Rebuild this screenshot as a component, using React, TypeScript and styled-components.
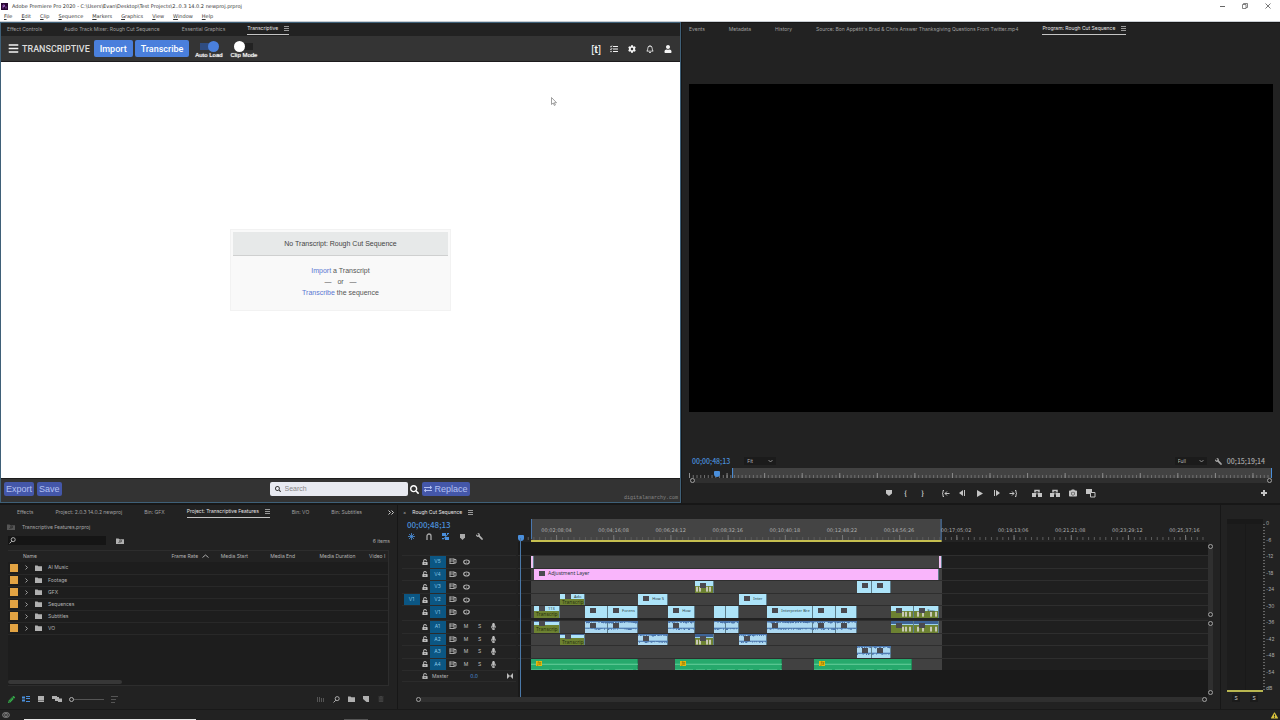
import React from "react";
import styled, { createGlobalStyle, css } from "styled-components";
import {
  FaBars,
  FaCamera,
  FaCog,
  FaExchangeAlt,
  FaMicrophone,
  FaRegBell,
  FaSearch,
  FaTasks,
  FaUnlockAlt,
  FaUser,
  FaWrench,
  FaPencilAlt,
  FaTrashAlt,
  FaExclamationTriangle,
} from "react-icons/fa";

const UI = `Inter, "Noto Sans", sans-serif`;
const NUM = `"Noto Sans CJK SC", "Noto Sans", sans-serif`;
const SYS = `"DejaVu Sans", "Noto Sans", sans-serif`;
const WEB = `"Liberation Sans", Arial, sans-serif`;

const Global = createGlobalStyle`
  *, *::before, *::after { box-sizing: border-box; }
  body { margin: 0; background: #181818; }
  button, input, select {
    font: inherit; color: inherit; background: none; border: 0; padding: 0; margin: 0;
    appearance: none; outline: none; border-radius: 0;
  }
  svg { display: block; flex: none; }
`;

/* ---------- frame ---------- */

const Page = styled.div`
  min-height: 100vh;
  display: grid;
  grid-template-rows: auto 1fr auto auto;
  background: #171717;
  color: #a8a8a8;
  font: 5px/10px ${UI};
  overflow: hidden;
`;

const WindowHead = styled.header`
  height: 22px;
  background: #fff;
  color: #333;
  border-bottom: 1px solid #c9ced3;
`;

const TitleBar = styled.div`
  height: 12px;
  display: flex;
  align-items: center;
  gap: 4px;
  padding-left: 1px;
  font: 5px/12px ${SYS};
`;

const WindowButtons = styled.div`
  margin-left: auto;
  display: flex;
  gap: 15px;
  padding-right: 8px;
  button {
    width: 8px;
    height: 10px;
    display: grid;
    place-items: center;
  }
`;

const MenuBar = styled.nav`
  display: flex;
  gap: 9px;
  padding-left: 4px;
  font: 5px/9px ${SYS};
  u {
    text-underline-offset: 1px;
  }
`;

const TopRow = styled.main`
  display: grid;
  grid-template-columns: 681fr 598fr;
  gap: 1px;
  min-height: 0;
`;

const TabStrip = styled.div<{ $left?: number; $h?: number; $gap?: number; $top?: number }>`
  display: flex;
  align-items: flex-start;
  gap: ${(p) => p.$gap ?? 22}px;
  height: ${(p) => p.$h ?? 13}px;
  padding: ${(p) => p.$top ?? 0}px 3px 0 ${(p) => p.$left ?? 6}px;
  background: #222;
  white-space: nowrap;
`;

const Tab = styled.button<{ $active?: boolean; $plain?: boolean }>`
  height: 12px;
  flex: none;
  display: flex;
  align-items: center;
  gap: 6px;
  font: 5px/13px ${UI};
  color: ${(p) => (p.$active ? "#e4e4e4" : "#a0a0a0")};
  ${(p) =>
    p.$active && !p.$plain
      ? css`
          border-bottom: 1px solid #c4c4c4;
        `
      : ""}
`;

const MoreTabs = styled.button`
  height: 12px;
  margin-left: auto;
  display: grid;
  place-items: center;
`;

/* ---------- transcript panel ---------- */

const TranscriptPanel = styled.section`
  display: flex;
  flex-direction: column;
  min-width: 0;
  border: 1px solid #3f6078;
  background: #fff;
`;

const Toolbar = styled.div`
  height: 26px;
  display: flex;
  align-items: center;
  padding: 0 8px 0 7px;
  background: #343434;
  border-bottom: 1px solid #1d1b1d;
  color: #f4f4f4;
  font-family: ${WEB};
`;

const Brand = styled.h1`
  margin: 0 4px 0 3px;
  font: 500 9px/12px Roboto, ${WEB};
  color: #dcdcdc;
`;

const Primary = styled.button`
  height: 17px;
  padding: 0 6px;
  margin-right: 2px;
  border-radius: 2px;
  background: #4a7fdc;
  color: #fff;
  font: 500 9px/16px Roboto, ${WEB};
`;

const Toggles = styled.div`
  display: flex;
  gap: 6px;
  margin-left: 3px;
`;

const Toggle = styled.label`
  width: 29px;
  display: flex;
  flex-direction: column;
  align-items: center;
  font: 6px/7px ${WEB};
  color: #fff;
  white-space: nowrap;
  text-shadow: 0 0 1px #fff;
`;

const Switch = styled.input`
  width: 20px;
  height: 11px;
  display: flex;
  align-items: center;
  background: linear-gradient(#222, #222) center / 18px 7px no-repeat;
  border-radius: 5px;
  margin: 2px 0 0;
  cursor: pointer;
  &::before {
    content: "";
    width: 11px;
    height: 11px;
    border-radius: 50%;
    background: #fff;
  }
  &:checked {
    justify-content: flex-end;
    background: linear-gradient(#2f4c80, #2f4c80) center / 18px 7px no-repeat;
  }
  &:checked::before {
    background: #4a80dc;
  }
`;

const ToolbarIcons = styled.div`
  margin-left: auto;
  display: flex;
  align-items: center;
  gap: 10px;
  button {
    display: grid;
    place-items: center;
    min-width: 8px;
    height: 12px;
  }
`;

const Mark = styled.span`
  margin-right: -1px;
  font: 11px/12px ${WEB};
`;

const Canvas = styled.div`
  flex: 1;
  display: grid;
  place-items: center;
  position: relative;
`;

const Cursor = styled.svg`
  position: absolute;
  left: 81%;
  top: 35px;
`;

const Card = styled.div`
  width: 221px;
  height: 82px;
  padding: 2px;
  border: 1px solid #f2f2f2;
  background: #f9f9f9;
  text-align: center;
  font: 7px/11px ${WEB};
  color: #555;
  h2 {
    margin: 0 0 9px;
    height: 24px;
    background: #e7e9e9;
    border-bottom: 1px solid #cfd0d0;
    font: 7px/23px ${WEB};
    color: #444;
  }
  p {
    margin: 0;
    white-space: pre;
  }
  a {
    color: #5a78d2;
    text-decoration: none;
  }
`;

const Footer = styled.div`
  display: grid;
  grid-template-columns: 266fr 138px 271fr;
  height: 24px;
  padding: 3px 2px 0 3px;
  background: #333;
  border-top: 1px solid #1d1d1d;
  font-family: ${WEB};
`;

const FootGroup = styled.div<{ $split?: boolean }>`
  display: flex;
  align-items: flex-start;
  gap: 3px;
  ${(p) =>
    p.$split
      ? css`
          justify-content: space-between;
          padding-left: 2px;
        `
      : ""}
`;

const FootButton = styled.button`
  height: 14px;
  padding: 0 2px;
  border-radius: 2px;
  background: #4457a9;
  color: #b3c0f2;
  font: 9px/13px ${WEB};
  display: flex;
  align-items: center;
  gap: 3px;
`;

const FindButton = styled.button`
  height: 14px;
  color: #fff;
`;

const SearchField = styled.label`
  flex: 1;
  height: 14px;
  display: flex;
  align-items: center;
  gap: 4px;
  padding-left: 5px;
  border-radius: 2px;
  background: #e8eaf1;
  color: #333;
  input {
    flex: 1;
    min-width: 0;
    font: 7px/12px ${WEB};
  }
  input::placeholder {
    color: #888;
    opacity: 1;
  }
`;

const Credit = styled.a`
  align-self: flex-end;
  color: #858585;
  font: 5px/8px "Liberation Mono", monospace;
  text-decoration: none;
`;

/* ---------- program panel ---------- */

const ProgramPanel = styled.section`
  display: flex;
  flex-direction: column;
  min-width: 0;
  margin-top: 1px;
  background: #222;
`;

const VideoArea = styled.div`
  flex: 1;
  display: flex;
  padding: 48px 7px 43px;
`;

const Video = styled.div`
  flex: 1;
  background: #000;
`;

const MonitorBar = styled.div`
  height: 12px;
  display: flex;
  align-items: center;
  padding: 0 15px 0 10px;
  gap: 5px;
`;

const Timecode = styled.span<{ $size?: number; $dim?: boolean }>`
  display: block;
  font: 500 ${(p) => p.$size ?? 7}px/12px ${NUM};
  color: ${(p) => (p.$dim ? "#a5a5a5" : "#4a90dc")};
`;

const Picker = styled.select`
  width: 32px;
  height: 8px;
  margin-left: 9px;
  padding-left: 3px;
  background: #1b1b1b;
  color: #b5b5b5;
  font: 5px/8px ${UI};
`;

const PickerWrap = styled.span`
  display: flex;
  align-items: center;
  svg {
    margin-left: -8px;
    margin-right: 6px;
    pointer-events: none;
  }
`;

const Wrench = styled(FaWrench)`
  transform: scaleX(-1);
`;

const Spacer = styled.span`
  flex: 1;
`;

const MonitorRuler = styled.div`
  height: 10px;
  margin: 1px 8px 0 7px;
  position: relative;
  svg {
    width: 100%;
    height: 10px;
  }
`;

const Marker = styled.span<{ $at: string; $top: number }>`
  position: absolute;
  left: ${(p) => p.$at};
  top: ${(p) => p.$top}px;
  width: 6px;
  height: 6px;
  background: #4a8fdc;
  border-radius: 1px 1px 3px 3px;
`;

const ScrollBar = styled.div<{ $vertical?: boolean }>`
  display: flex;
  flex-direction: ${(p) => (p.$vertical ? "column" : "row")};
  justify-content: space-between;
  background: #2f2f2f;
  ${(p) => (p.$vertical ? "width: 5px;" : "height: 5px;")}
  &::before,
  &::after {
    content: "";
    width: 5px;
    height: 5px;
    border: 1px solid #a0a0a0;
    border-radius: 50%;
    background: #222;
  }
`;

const MonitorScroll = styled(ScrollBar)`
  margin: 0 8px 1px;
`;

const Transport = styled.div`
  flex: none;
  height: 19px;
  display: flex;
  align-items: center;
  padding: 0 7px 1px 198px;
  color: #c4c4c4;
`;

const TransportGroup = styled.div<{ $w: number }>`
  display: flex;
  margin-right: 6px;
  &:last-child {
    margin-right: 5px;
  }
  button {
    width: ${(p) => p.$w}px;
    height: 12px;
    display: grid;
    place-items: center;
    font: 700 7px/10px ${NUM};
  }
`;

/* ---------- bottom row ---------- */

const BottomRow = styled.div`
  display: grid;
  grid-template-columns: 397fr 822fr 59px;
  gap: 1px;
  padding-top: 2px;
  height: 206px;
`;

const Panel = styled.section`
  min-width: 0;
  display: flex;
  flex-direction: column;
  background: #222;
`;

const ProjectPath = styled.div`
  height: 12px;
  display: flex;
  align-items: center;
  gap: 7px;
  padding: 0 7px;
`;

const FilterRow = styled.div`
  height: 15px;
  display: flex;
  align-items: center;
  padding: 0 7px 0 8px;
`;

const FilterField = styled.label`
  width: 98px;
  height: 9px;
  margin-right: 10px;
  padding-left: 1px;
  display: flex;
  align-items: center;
  background: #151515;
  input {
    min-width: 0;
    flex: 1;
  }
`;

const BinFrame = styled.div`
  flex: 1;
  margin: 2px 8px 0;
  display: flex;
  flex-direction: column;
  justify-content: space-between;
  border: solid #2d2d2d;
  border-width: 1px 1px 1px 0;
  background: #1d1d1d;
  overflow: hidden;
`;

const BinTable = styled.table`
  width: 100%;
  border-collapse: collapse;
  table-layout: fixed;
  font: 5px/11px ${UI};
  color: #b4b4b4;
  th {
    height: 11px;
    padding: 0;
    font-weight: 400;
    text-align: left;
    white-space: nowrap;
    background: #222;
  }
  th:first-child {
    padding-left: 15px;
  }
  td {
    height: 12px;
    padding: 0;
    border-bottom: 1px solid #282828;
  }
  th svg {
    display: inline-block;
    margin-left: 2px;
  }
`;

const BinName = styled.div`
  display: flex;
  align-items: center;
  gap: 6px;
  padding-left: 2px;
  white-space: nowrap;
`;

const Label = styled.span`
  width: 8px;
  height: 8px;
  background: #e2a343;
`;

const Thumb = styled.div`
  width: 30%;
  height: 4px;
  margin-bottom: 1px;
  border-radius: 2px;
  background: #373737;
`;

const BinTools = styled.div`
  height: 23px;
  display: flex;
  align-items: center;
  gap: 7px;
  padding: 3px 12px 0 7px;
  color: #b0b0b0;
  button {
    height: 9px;
    min-width: 8px;
    display: grid;
    place-items: center;
  }
`;

const ZoomRange = styled.input`
  width: 35px;
  height: 6px;
  background: linear-gradient(#555, #555) center / 100% 1px no-repeat;
  &::-webkit-slider-thumb {
    appearance: none;
    width: 5px;
    height: 5px;
    border: 1px solid #b0b0b0;
    border-radius: 50%;
    background: #222;
  }
`;

/* ---------- timeline ---------- */

const TimelineGrid = styled.div`
  flex: 1;
  display: grid;
  grid-template-columns: 120px 1fr 12px;
  min-height: 0;
`;

const HeadColumn = styled.div`
  padding: 0 2px 0 4px;
`;

const HeadTools = styled.div`
  height: 37px;
  padding: 1px 0 0 5px;
`;

const ToolIcons = styled.div`
  display: flex;
  gap: 8px;
  padding-top: 1px;
  button {
    width: 9px;
    height: 9px;
    display: grid;
    place-items: center;
  }
`;

const TrackGroup = styled.div<{ $rows: number; $h: number }>`
  display: grid;
  grid-template-rows: repeat(${(p) => p.$rows}, minmax(0, 1fr));
  height: ${(p) => p.$h}px;
`;

const TrackHead = styled.div`
  display: grid;
  grid-template-columns: 19px 8px 17px 13px 14px 13px 14px;
  grid-template-rows: minmax(0, 1fr);
  align-items: center;
  justify-items: center;
  border-top: 1px solid #2b2b2b;
  color: #c0c0c0;
  font: 5px/11px ${UI};
  button {
    display: grid;
    place-items: center;
  }
`;

const TrackTag = styled.button`
  width: 16px;
  height: 100%;
  background: #0b5683;
  color: #84c2e2;
  font: 5px/11px ${UI};
`;

const MasterHead = styled.div`
  height: 12px;
  display: flex;
  align-items: center;
  gap: 4px;
  padding: 0 3px 0 20px;
  border-top: 1px solid #2b2b2b;
  border-bottom: 1px solid #2b2b2b;
  color: #b4b4b4;
`;

const Value = styled.span`
  margin: 0 auto 0 18px;
  color: #4a8fdc;
`;

const TrackArea = styled.div`
  position: relative;
  display: flex;
  flex-direction: column;
  min-width: 0;
  background: #1a1a1a;
`;

const Ruler = styled.div`
  height: 24px;
  background: #222;
  position: relative;
  svg {
    width: 100%;
    height: 24px;
  }
`;

const RulerLabels = styled.div`
  position: absolute;
  left: 10px;
  right: -5px;
  top: 7px;
  display: flex;
  color: #b0b0b0;
  font: 5px/10px ${SYS};
  span {
    flex: 1 0 0;
    min-width: 0;
    text-align: center;
  }
`;

const LaneStack = styled.div`
  margin-top: 13px;
  background: linear-gradient(90deg, #1f1f1f 13px, #414141 13px, #414141 61.4%, #1f1f1f 61.4%);
`;

const Lane = styled.div`
  display: flex;
  min-width: 0;
  min-height: 0;
  border-top: 1px solid #2e2e2e;
`;

const Divider = styled.div`
  height: 2px;
  background: #222;
`;

const Gap = styled.div<{ $n: number }>`
  flex: ${(p) => p.$n} 0 0;
  min-width: 0;
`;

type Kind = "video" | "adj" | "title" | "titleAudio" | "bars" | "barsAudio" | "audio" | "music" | "edge";

const fills: Record<Kind, string> = {
  video: "#ade4f9",
  adj: "#f9b5fb",
  title: "linear-gradient(#ade4f9 5px, #6d8232 5px)",
  titleAudio: "linear-gradient(#4a6a9a 1px, #ade4f9 1px, #ade4f9 4px, #6d8232 4px)",
  bars: "linear-gradient(#ade4f9 5px, #6d8232 5px)",
  barsAudio: "linear-gradient(#3f6496 3px, #9cd0ec 3px, #9cd0ec 4px, #6d8232 4px)",
  audio: "#add9f1",
  music: "#26a96c",
  edge: "#f1c1f3",
};

const ClipBox = styled.div<{ $n: number; $kind: Kind }>`
  flex: ${(p) => p.$n} 0 0;
  min-width: 0;
  overflow: hidden;
  display: grid;
  background: ${(p) => fills[p.$kind]};
  box-shadow: inset -1px 0 ${(p) => (p.$kind === "music" ? "#1f8a58" : "#5d7d8b")};
  > * {
    grid-area: 1 / 1;
    min-width: 0;
    min-height: 0;
  }
  > svg {
    width: 100%;
    height: 100%;
  }
`;

const ClipName = styled.div<{ $kind: Kind }>`
  display: flex;
  align-items: flex-start;
  gap: 3px;
  padding: ${(p) => (p.$kind === "title" || p.$kind === "titleAudio" ? 0 : 2)}px 0 0 5px;
  color: #2a3a42;
  font: ${(p) => (p.$kind === "adj" ? 5 : 4)}px/5px "Noto Sans", sans-serif;
  white-space: nowrap;
`;

const FxBadge = styled.i<{ $gold?: boolean }>`
  flex: none;
  width: 6px;
  height: 5px;
  background: ${(p) => (p.$gold ? "#e5b80f" : "#4a4a50")};
  color: #5c4a00;
  font: italic 4px/5px ${UI};
  text-align: center;
`;

const TitleText = styled.div`
  padding: 5px 0 0 2px;
  color: #26300f;
  font: 5px/7px "Noto Sans", sans-serif;
  white-space: nowrap;
`;

const PlayLine = styled.span`
  position: absolute;
  left: 2px;
  top: 20px;
  bottom: 0;
  width: 1px;
  background: #4a78a8;
`;

const TimelineScroll = styled(ScrollBar)`
  margin: 0 13px 7px 18px;
`;

const VScrolls = styled.div`
  padding: 26px 0 2px;
  display: flex;
  flex-direction: column;
  gap: 4px;
  div:first-child {
    height: 73px;
  }
  div:last-child {
    flex: 1;
  }
`;

/* ---------- meters ---------- */

const Meters = styled.div`
  flex: 1;
  display: grid;
  grid-template-columns: 36px auto;
  grid-template-rows: 1fr 17px;
  padding: 14px 0 0 6px;
`;

const MeterWell = styled.div`
  display: grid;
  grid-template-columns: 1fr 1px 1fr;
  border-top: 5px solid #191919;
  border-bottom: 2px solid #b9b650;
  background: #1d1d1d;
  span {
    background: #191919;
    grid-column: 2;
  }
`;

const MeterScale = styled.div`
  display: flex;
  flex-direction: column;
  justify-content: space-between;
  padding: 1px 0 0 3px;
  font: 5px/7px ${UI};
  background: repeating-linear-gradient(#666 0 1px, transparent 1px 3px) 0 5px / 2px 100% no-repeat;
`;

const SoloRow = styled.div`
  display: flex;
  justify-content: space-around;
  align-items: flex-start;
  padding-top: 2px;
  button {
    width: 8px;
    height: 8px;
    background: #1b1b1b;
    color: #d0d0d0;
    font: 5px/8px ${UI};
  }
`;

const StatusBar = styled.footer`
  height: 11px;
  display: flex;
  align-items: center;
  justify-content: space-between;
  padding: 0 2px;
  border-top: 1px solid #191919;
  background:
    linear-gradient(#e8e8e8, #e8e8e8) 24px 100% / 172px 1px no-repeat,
    linear-gradient(#555, #555) 344px 100% / 24px 1px no-repeat,
    #222;
`;

/* ---------- icons ---------- */

const Lines = () => (
  <svg width="5" height="5" viewBox="0 0 5 5" stroke="#999">
    <path d="M0 .5h5M0 2.5h5M0 4.5h5" />
  </svg>
);

const Chevron = () => (
  <svg width="5" height="4" viewBox="0 0 5 4" fill="none" stroke="#aaa" strokeWidth=".8">
    <path d="M.5 1 2.5 3 4.5 1" />
  </svg>
);

const Glass = () => (
  <svg width="7" height="7" viewBox="0 0 8 8" fill="none" stroke="#b4b4b4" strokeWidth="1.1">
    <circle cx="4.8" cy="3" r="2.3" />
    <path d="M3.2 4.8.6 7.4" />
  </svg>
);

const Folder = () => (
  <svg width="7" height="6" viewBox="0 0 7 6" fill="#b0b0b0">
    <path d="M0 .5h2.5L3.3 1.3H7V6H0z" />
  </svg>
);

const SearchFolder = ({ color, hole }: { color: string; hole: string }) => (
  <svg width="8" height="6" viewBox="0 0 8 6">
    <path d="M0 .5h2.5L3.3 1.3H8V6H0z" fill={color} />
    <path d="M2.5 5 4 3.5" stroke={hole} strokeWidth=".8" />
    <circle cx="4.6" cy="3" r="1" stroke={hole} strokeWidth=".7" fill="none" />
  </svg>
);

const Film = () => (
  <svg width="8" height="7" viewBox="0 0 8 7" fill="none" stroke="#b4b4b4">
    <path d="M.5 1h4.5M.5 3h4.5M.5 5.5h4.5M1 .5v5M5 .5v5.5" strokeWidth=".9" />
    <path d="M5 1.5h2v3.5H5" strokeWidth=".9" />
  </svg>
);

const Eye = () => (
  <svg width="7" height="6" viewBox="0 0 7 6" fill="none" stroke="#b4b4b4" strokeWidth="1.2">
    <ellipse cx="3.5" cy="3" rx="2.8" ry="2" />
    <circle cx="3.5" cy="3" r=".5" fill="#b4b4b4" stroke="none" />
  </svg>
);

const Disclosure = () => (
  <svg width="5" height="5" viewBox="0 0 5 5" fill="none" stroke="#aaa" strokeWidth=".9">
    <path d="M1.5.5 3.5 2.5 1.5 4.5" />
  </svg>
);

/* ---------- data ---------- */

type Clip = { from: number; to: number; kind: Kind; name?: string; fx?: boolean };
const c = (from: number, to: number, kind: Kind, name?: string, fx = true): Clip => ({ from, to, kind, name, fx });

/* Lane coordinates run over the visible span of the sequence. */
const SPAN_START = 518;
const SPAN_END = 1207;

const videoLanes: Clip[][] = [
  [c(531, 534, "edge", undefined, false), c(938, 941, "edge", undefined, false)],
  [c(534, 938, "adj", "Adjustment Layer")],
  [c(695, 714, "bars"), c(857, 871, "video"), c(871, 890, "video")],
  [c(560, 585, "title", "Ado"), c(638, 668, "video", "How S"), c(739, 767, "video", "Inter")],
  [
    c(534, 560, "title", "113"),
    c(585, 608, "video"),
    c(608, 638, "video", "Forens"),
    c(668, 695, "video", "How"),
    c(714, 726, "video", undefined, false),
    c(726, 739, "video", undefined, false),
    c(767, 813, "video", "Interpreter Bre"),
    c(813, 836, "video"),
    c(836, 857, "video"),
    c(890, 913, "bars"),
    c(913, 938, "bars", "Fau"),
  ],
];

const audioLanes: Clip[][] = [
  [
    c(534, 560, "titleAudio"),
    c(585, 608, "audio"),
    c(608, 638, "audio"),
    c(668, 695, "audio"),
    c(714, 726, "audio", undefined, false),
    c(726, 739, "audio", undefined, false),
    c(767, 813, "audio"),
    c(813, 836, "audio"),
    c(836, 857, "audio"),
    c(890, 913, "barsAudio"),
    c(913, 938, "barsAudio"),
  ],
  [c(560, 585, "titleAudio"), c(638, 668, "audio"), c(695, 714, "barsAudio"), c(739, 767, "audio")],
  [c(857, 871, "audio"), c(871, 890, "audio")],
  [c(531, 638, "music"), c(675, 782, "music"), c(814, 911, "music")],
];

const rulerTimes = [
  "00;02;08;04", "00;04;16;08", "00;06;24;12", "00;08;32;16", "00;10;40;18", "00;12;48;22",
  "00;14;56;26", "00;17;05;02", "00;19;13;06", "00;21;21;08", "00;23;29;12", "00;25;37;16",
];

const range = (n: number) => Array.from({ length: n }, (_, i) => i);

function Wave({ n, seed }: { n: number; seed: number }) {
  const amp = (i: number) => Math.abs(Math.sin(i * 12.9 + seed) * 43758.5) % 1;
  return (
    <svg viewBox={`0 0 ${n} 12`} preserveAspectRatio="none" stroke="#4a74ac">
      <path d={`M0 .5H${n}`} />
      <path d={range(n).map((i) => `M${i + 0.5} 1v${(amp(i) * 1.6).toFixed(1)}`).join("")} />
      <path d={`M0 7.5H${n}`} />
      <path d={range(n).map((i) => `M${i + 0.5} 7.5v${(amp(i + 7) * 2).toFixed(1)}`).join("")} />
    </svg>
  );
}

function MusicWave({ n }: { n: number }) {
  return (
    <svg viewBox={`0 0 ${n} 12`} preserveAspectRatio="none" stroke="#7fdcae">
      <path d={`M0 5.5H${n}`} strokeOpacity=".75" />
      <path d={`M0 11.5H${n}`} strokeOpacity=".7" strokeDasharray="18 3 9 2 4 6" />
    </svg>
  );
}

function Bars({ n }: { n: number }) {
  const spots = n < 20 ? [1, 4, 11, 14] : n < 24 ? [11, 14, 18] : [3, 8, 16, 21];
  return (
    <svg viewBox={`0 0 ${n} 12`} preserveAspectRatio="none" fill="#c9c9b6">
      {spots.map((x) => (
        <rect key={x} x={x} y="6" width="2" height="5" />
      ))}
    </svg>
  );
}

function ClipView({ clip }: { clip: Clip }) {
  const n = clip.to - clip.from;
  const isTitle = clip.kind === "title" || clip.kind === "titleAudio";
  const isBars = clip.kind === "bars" || clip.kind === "barsAudio";
  return (
    <ClipBox $n={n} $kind={clip.kind}>
      {clip.kind === "audio" && <Wave n={n} seed={clip.from} />}
      {clip.kind === "music" && <MusicWave n={n} />}
      {isBars && <Bars n={n} />}
      {isTitle && <TitleText>Transcrip</TitleText>}
      {clip.fx && (
        <ClipName $kind={clip.kind}>
          <FxBadge $gold={clip.kind === "music"}>{clip.kind === "music" ? "fx" : ""}</FxBadge>
          {clip.name}
        </ClipName>
      )}
    </ClipBox>
  );
}

function LaneView({ clips }: { clips: Clip[] }) {
  let at = SPAN_START;
  const parts: React.ReactNode[] = [];
  clips.forEach((clip) => {
    if (clip.from > at) parts.push(<Gap key={`g${at}`} $n={clip.from - at} />);
    parts.push(<ClipView key={clip.from} clip={clip} />);
    at = clip.to;
  });
  parts.push(<Gap key="end" $n={SPAN_END - at} />);
  return <Lane>{parts}</Lane>;
}

function TrackHeadView({ name }: { name: string }) {
  const audio = name[0] === "A";
  return (
    <TrackHead>
      {name === "V2" ? <TrackTag>V1</TrackTag> : <span />}
      <button aria-label={`Lock ${name}`}>
        <FaUnlockAlt size={6} />
      </button>
      <TrackTag>{name}</TrackTag>
      <Film />
      {audio ? (
        <>
          <button>M</button>
          <button>S</button>
          <button aria-label="Record">
            <FaMicrophone size={7} />
          </button>
        </>
      ) : (
        <button aria-label={`Show ${name}`}>
          <Eye />
        </button>
      )}
    </TrackHead>
  );
}

const menus = ["File", "Edit", "Clip", "Sequence", "Markers", "Graphics", "View", "Window", "Help"];
const bins = ["AI Music", "Footage", "GFX", "Sequences", "Subtitles", "VO"];

function ProgramMonitor() {
  return (
    <ProgramPanel>
      <TabStrip $left={7} $gap={24}>
        <Tab>Events</Tab>
        <Tab>Metadata</Tab>
        <Tab>History</Tab>
        <Tab>Source: Bon Appétit's Brad &amp; Chris Answer Thanksgiving Questions From Twitter.mp4</Tab>
        <Tab $active>
          Program: Rough Cut Sequence <Lines />
        </Tab>
      </TabStrip>
      <VideoArea>
        <Video />
      </VideoArea>
      <MonitorBar>
        <Timecode>00;00;48;13</Timecode>
        <PickerWrap>
          <Picker aria-label="Zoom level">
            <option>Fit</option>
          </Picker>
          <Chevron />
        </PickerWrap>
        <Spacer />
        <PickerWrap>
          <Picker aria-label="Playback resolution">
            <option>Full</option>
          </Picker>
          <Chevron />
        </PickerWrap>
        <Wrench size={7} />
        <Timecode $dim>00;15;19;14</Timecode>
      </MonitorBar>
      <MonitorRuler>
        <svg viewBox="0 0 582 10" preserveAspectRatio="none">
          <rect x="43" width="539" height="10" fill="#424242" />
          <path d={range(155).map((i) => `M${i * 3.75 + 0.5} 7v3`).join("")} stroke="#707070" />
          <path d={range(16).map((i) => `M${i * 37.5 + 0.5} 5v5`).join("")} stroke="#8a8a8a" />
          <path d="M43.5 0v10M581.5 0v10" stroke="#4a8fdc" />
        </svg>
        <Marker $at="4.3%" $top={3} />
      </MonitorRuler>
      <MonitorScroll />
      <Transport>
        <TransportGroup $w={17}>
          <button aria-label="Add marker">
            <svg width="6" height="6" viewBox="0 0 6 6" fill="currentColor">
              <path d="M0 0h6v3.5L3 6 0 3.5z" />
            </svg>
          </button>
          <button>{"{"}</button>
          <button>{"}"}</button>
        </TransportGroup>
        <TransportGroup $w={17}>
          <button aria-label="Go to in">
            <svg width="9" height="7" viewBox="0 0 9 7" fill="none" stroke="currentColor">
              <path d="M3 .5H2v2.3L1 3.5l1 .7V6.5h1M4 3.5h4.5M6 1.5 4 3.5l2 2" />
            </svg>
          </button>
          <button aria-label="Step back">
            <svg width="7" height="6" viewBox="0 0 7 6" fill="currentColor">
              <path d="M4 0v6L0 3zM5 0h1v6H5z" />
            </svg>
          </button>
          <button aria-label="Play">
            <svg width="6" height="7" viewBox="0 0 6 7" fill="currentColor">
              <path d="M0 0v7l6-3.5z" />
            </svg>
          </button>
          <button aria-label="Step forward">
            <svg width="7" height="6" viewBox="0 0 7 6" fill="currentColor">
              <path d="M3 0v6l4-3zM1 0h1v6H1z" />
            </svg>
          </button>
          <button aria-label="Go to out">
            <svg width="9" height="7" viewBox="0 0 9 7" fill="none" stroke="currentColor">
              <path d="M6 .5h1v2.3l1 .7-1 .7V6.5H6M5 3.5H.5M3 1.5l2 2-2 2" />
            </svg>
          </button>
        </TransportGroup>
        <TransportGroup $w={18}>
          {["Lift", "Extract"].map((n) => (
            <button key={n} aria-label={n}>
              <svg width="10" height="8" viewBox="0 0 10 8">
                <path d="M0 4h4v4H0zM6 4h4v4H6z" fill="currentColor" />
                <path d="M3 3.5V1.5h4V3.5" fill="none" stroke="currentColor" strokeWidth="1.5" />
                <path d="M4.5 3.5h1v2h-1z" fill="currentColor" />
              </svg>
            </button>
          ))}
          <button aria-label="Export frame">
            <FaCamera size={8} />
          </button>
          <button aria-label="Comparison view">
            <svg width="10" height="9" viewBox="0 0 10 9">
              <path d="M0 0h6v5H0z" fill="currentColor" />
              <path d="M4.5 3.5h4.5v4.5H4.5z" fill="#222" stroke="currentColor" />
            </svg>
          </button>
        </TransportGroup>
        <Spacer />
        <TransportGroup $w={8}>
          <button aria-label="Button editor">
            <svg width="6" height="6" viewBox="0 0 6 6" fill="currentColor">
              <path d="M2 0h2v2h2v2H4v2H2V4H0V2h2z" />
            </svg>
          </button>
        </TransportGroup>
      </Transport>
    </ProgramPanel>
  );
}

function Project() {
  return (
    <Panel>
      <TabStrip $left={17} $h={16} $top={1}>
        <Tab>Effects</Tab>
        <Tab>Project: 2.0.3 14.0.2 newproj</Tab>
        <Tab>Bin: GFX</Tab>
        <Tab $active>
          Project: Transcriptive Features <Lines />
        </Tab>
        <Tab>Bin: VO</Tab>
        <Tab>Bin: Subtitles</Tab>
        <MoreTabs aria-label="More tabs">
          <svg width="6" height="5" viewBox="0 0 6 5" fill="none" stroke="#ccc">
            <path d="M.5.5l2 2-2 2M3.5.5l2 2-2 2" />
          </svg>
        </MoreTabs>
      </TabStrip>
      <ProjectPath>
        <SearchFolder color="#555" hole="#222" />
        Transcriptive Features.prproj
      </ProjectPath>
      <FilterRow>
        <FilterField>
          <Glass />
          <input aria-label="Filter bin" />
        </FilterField>
        <SearchFolder color="#b0b0b0" hole="#333" />
        <Spacer />6 items
      </FilterRow>
      <BinFrame>
        <BinTable>
          <colgroup>
            <col width="43%" />
            <col width="13%" />
            <col width="13%" />
            <col width="13%" />
            <col width="13%" />
            <col width="5%" />
          </colgroup>
          <thead>
            <tr>
              <th>Name</th>
              <th>
                Frame Rate{" "}
                <svg width="7" height="4" viewBox="0 0 7 4" fill="none" stroke="#aaa">
                  <path d="M.5 3.5 3.5 1l3 2.5" />
                </svg>
              </th>
              <th>Media Start</th>
              <th>Media End</th>
              <th>Media Duration</th>
              <th>Video I</th>
            </tr>
          </thead>
          <tbody>
            {bins.map((b) => (
              <tr key={b}>
                <td colSpan={6}>
                  <BinName>
                    <Label />
                    <Disclosure />
                    <Folder />
                    {b}
                  </BinName>
                </td>
              </tr>
            ))}
          </tbody>
        </BinTable>
        <Thumb />
      </BinFrame>
      <BinTools>
        <button aria-label="Writable">
          <FaPencilAlt size={7} color="#35b04a" />
        </button>
        <button aria-label="List view">
          <svg width="8" height="6" viewBox="0 0 8 6" stroke="#4a8fdc">
            <path d="M0 1.5h3M0 4.5h3" strokeWidth="2" />
            <path d="M4 .5h4M4 2.5h4M4 5.5h4" />
          </svg>
        </button>
        <button aria-label="Icon view">
          <svg width="6" height="6" viewBox="0 0 6 6" fill="#b0b0b0">
            <path d="M0 0h6v6H0z" />
            <path d="M0 4.5h6" stroke="#777" />
          </svg>
        </button>
        <button aria-label="Freeform view">
          <svg width="10" height="6" viewBox="0 0 10 6" fill="#b0b0b0">
            <path d="M0 0h5v3H0zM3 1h4v4H3zM6 2.5h4v3.5H6z" />
          </svg>
        </button>
        <ZoomRange type="range" defaultValue={0} aria-label="Thumbnail size" />
        <svg width="7" height="7" viewBox="0 0 7 7" stroke="#555">
          <path d="M0 .5h7M0 3.5h5M0 6.5h4" />
        </svg>
        <Spacer />
        <svg width="8" height="5" viewBox="0 0 8 5" stroke="#555">
          <path d="M.5 0v5M2.5 0v5M4.5 1v4M6.5 1v4" />
        </svg>
        <button aria-label="Find">
          <Glass />
        </button>
        <button aria-label="New bin">
          <Folder />
        </button>
        <button aria-label="New item">
          <svg width="6" height="6" viewBox="0 0 6 6" fill="#b0b0b0">
            <path d="M0 0h6v6H3.5L0 3z" />
          </svg>
        </button>
        <button aria-label="Delete">
          <FaTrashAlt size={6} color="#444" />
        </button>
      </BinTools>
    </Panel>
  );
}

function Timeline() {
  return (
    <Panel>
      <TabStrip $left={5} $h={13} $gap={6} $top={1}>
        <Tab>×</Tab>
        <Tab $active $plain>
          Rough Cut Sequence <Lines />
        </Tab>
      </TabStrip>
      <TimelineGrid>
        <HeadColumn>
          <HeadTools>
            <Timecode $size={8}>00;00;48;13</Timecode>
            <ToolIcons>
              <button aria-label="Nest">
                <svg width="7" height="7" viewBox="0 0 7 7" stroke="#4a8fdc">
                  <path d="M3.5 0v7M0 3.5h7M1 1l5 5M6 1 1 6" strokeWidth=".8" />
                </svg>
              </button>
              <button aria-label="Snap">
                <svg width="6" height="7" viewBox="0 0 6 7" fill="none" stroke="#aaa">
                  <path d="M1 7V3a2 2 0 0 1 4 0v4" strokeWidth="1.3" />
                </svg>
              </button>
              <button aria-label="Linked selection">
                <svg width="7" height="7" viewBox="0 0 7 7" fill="#4a8fdc">
                  <path d="M0 0h4v3H0zM3 4h4v3H3z" />
                  <path d="M6.5.5 1 6.5M5 .5h2M0 5.5h2" stroke="#4a8fdc" />
                </svg>
              </button>
              <button aria-label="Add marker">
                <svg width="5" height="6" viewBox="0 0 5 6" fill="#aaa">
                  <path d="M0 0h5v3.5L2.5 6 0 3.5z" />
                </svg>
              </button>
              <button aria-label="Timeline settings">
                <Wrench size={7} color="#b4b4b4" />
              </button>
            </ToolIcons>
          </HeadTools>
          <TrackGroup $rows={5} $h={63}>
            {["V5", "V4", "V3", "V2", "V1"].map((t) => (
              <TrackHeadView key={t} name={t} />
            ))}
          </TrackGroup>
          <Divider />
          <TrackGroup $rows={4} $h={50}>
            {["A1", "A2", "A3", "A4"].map((t) => (
              <TrackHeadView key={t} name={t} />
            ))}
          </TrackGroup>
          <MasterHead>
            <FaUnlockAlt size={6} />
            Master
            <Value>0.0</Value>
            <svg width="6" height="6" viewBox="0 0 6 6" fill="#bbb">
              <path d="M0 0l3 3-3 3zM6 0v6L3 3z" />
            </svg>
          </MasterHead>
        </HeadColumn>
        <TrackArea>
          <Ruler>
            <svg viewBox="0 0 689 24" preserveAspectRatio="none">
              <rect x="13" y="1" width="410" height="23" fill="#444" />
              <path d={range(120).map((i) => `M${4.5 + i * 5.71} 19v3`).join("")} stroke="#5c5c5c" />
              <path d={range(12).map((i) => `M${38.5 + i * 57.1} 17v5`).join("")} stroke="#777" />
              <path d="M13 23H423" stroke="#c5bf50" strokeWidth="2" />
              <path d="M13.5 1v20M422.5 1v21" stroke="#4a78b0" />
            </svg>
            <RulerLabels>
              {rulerTimes.map((t) => (
                <span key={t}>{t}</span>
              ))}
            </RulerLabels>
          </Ruler>
          <LaneStack>
            <TrackGroup $rows={5} $h={63}>
              {videoLanes.map((l, i) => (
                <LaneView key={i} clips={l} />
              ))}
            </TrackGroup>
            <Divider />
            <TrackGroup $rows={4} $h={50}>
              {audioLanes.map((l, i) => (
                <LaneView key={i} clips={l} />
              ))}
            </TrackGroup>
          </LaneStack>
          <Marker $at="0%" $top={17} />
          <PlayLine />
        </TrackArea>
        <VScrolls>
          <ScrollBar $vertical />
          <ScrollBar $vertical />
        </VScrolls>
      </TimelineGrid>
      <TimelineScroll />
    </Panel>
  );
}

export default function App() {
  return (
    <Page>
      <Global />
      <WindowHead>
        <TitleBar>
          <svg width="7" height="7" viewBox="0 0 7 7">
            <rect width="7" height="7" fill="#2a0634" />
            <path d="M2 5.5V2h1.5v1.5H2M5 5.5V3.5" stroke="#d18cff" strokeWidth=".6" fill="none" />
          </svg>
          Adobe Premiere Pro 2020 - C:\Users\Evan\Desktop\Test Projects\2..0.3 14.0.2 newproj.prproj
          <WindowButtons>
            <button aria-label="Minimize">
              <svg width="5" height="5" viewBox="0 0 5 5" stroke="#666">
                <path d="M0 2.5h5" />
              </svg>
            </button>
            <button aria-label="Restore">
              <svg width="6" height="6" viewBox="0 0 6 6" stroke="#666" fill="none" strokeWidth=".8">
                <path d="M.5 1.5h3.5v4H.5zM1.5 1.5v-1h4v4h-1.5" />
              </svg>
            </button>
            <button aria-label="Close">
              <svg width="6" height="6" viewBox="0 0 6 6" stroke="#555" strokeWidth=".8">
                <path d="M.5.5l5 5M5.5.5l-5 5" />
              </svg>
            </button>
          </WindowButtons>
        </TitleBar>
        <MenuBar>
          {menus.map((m) => (
            <span key={m}>
              <u>{m[0]}</u>
              {m.slice(1)}
            </span>
          ))}
        </MenuBar>
      </WindowHead>

      <TopRow>
        <TranscriptPanel>
          <TabStrip>
            <Tab>Effect Controls</Tab>
            <Tab>Audio Track Mixer: Rough Cut Sequence</Tab>
            <Tab>Essential Graphics</Tab>
            <Tab $active>
              Transcriptive <Lines />
            </Tab>
          </TabStrip>
          <Toolbar>
            <FaBars size={11} />
            <Brand>TRANSCRIPTIVE</Brand>
            <Primary>Import</Primary>
            <Primary>Transcribe</Primary>
            <Toggles>
              <Toggle>
                <Switch type="checkbox" defaultChecked />
                Auto Load
              </Toggle>
              <Toggle>
                <Switch type="checkbox" />
                Clip Mode
              </Toggle>
            </Toggles>
            <ToolbarIcons>
              <button aria-label="Transcript">
                <Mark>
                  [<b>t</b>]
                </Mark>
              </button>
              <button aria-label="List">
                <FaTasks size={8} />
              </button>
              <button aria-label="Settings">
                <FaCog size={8} />
              </button>
              <button aria-label="Notifications">
                <FaRegBell size={8} />
              </button>
              <button aria-label="Account">
                <FaUser size={8} />
              </button>
            </ToolbarIcons>
          </Toolbar>
          <Canvas>
            <Card>
              <h2>No Transcript: Rough Cut Sequence</h2>
              <p>
                <a href="#import">Import</a> a Transcript
              </p>
              <p>{"—   or   —"}</p>
              <p>
                <a href="#transcribe">Transcribe</a> the sequence
              </p>
            </Card>
            <Cursor width="6" height="9" viewBox="0 0 6 9" fill="#fff" stroke="#888" strokeWidth=".8">
              <path d="M.5.5v7l1.7-1.5 1.2 2.5 1-.5-1.1-2.3H5.5z" />
            </Cursor>
          </Canvas>
          <Footer>
            <FootGroup>
              <FootButton>Export</FootButton>
              <FootButton>Save</FootButton>
            </FootGroup>
            <FootGroup>
              <SearchField>
                <FaSearch size={6} />
                <input placeholder="Search" aria-label="Search transcript" />
              </SearchField>
            </FootGroup>
            <FootGroup $split>
              <FootGroup>
                <FindButton aria-label="Find">
                  <FaSearch size={9} />
                </FindButton>
                <FootButton>
                  <FaExchangeAlt size={8} />
                  Replace
                </FootButton>
              </FootGroup>
              <Credit href="#digitalanarchy">digitalanarchy.com</Credit>
            </FootGroup>
          </Footer>
        </TranscriptPanel>
        <ProgramMonitor />
      </TopRow>

      <BottomRow>
        <Project />
        <Timeline />
        <Panel>
          <Meters>
            <MeterWell>
              <span />
            </MeterWell>
            <MeterScale>
              {["0", "-6", "-12", "-18", "-24", "-30", "-36", "-42", "-48", "-54", "dB"].map((v) => (
                <span key={v}>{v}</span>
              ))}
            </MeterScale>
            <SoloRow>
              <button>S</button>
              <button>S</button>
            </SoloRow>
          </Meters>
        </Panel>
      </BottomRow>
      <StatusBar>
        <svg width="8" height="6" viewBox="0 0 8 6" fill="none" stroke="#888">
          <circle cx="3" cy="3" r="2.3" />
          <circle cx="5" cy="3" r="2.3" />
        </svg>
        <FaExclamationTriangle size={7} color="#d8c23c" />
      </StatusBar>
    </Page>
  );
}
